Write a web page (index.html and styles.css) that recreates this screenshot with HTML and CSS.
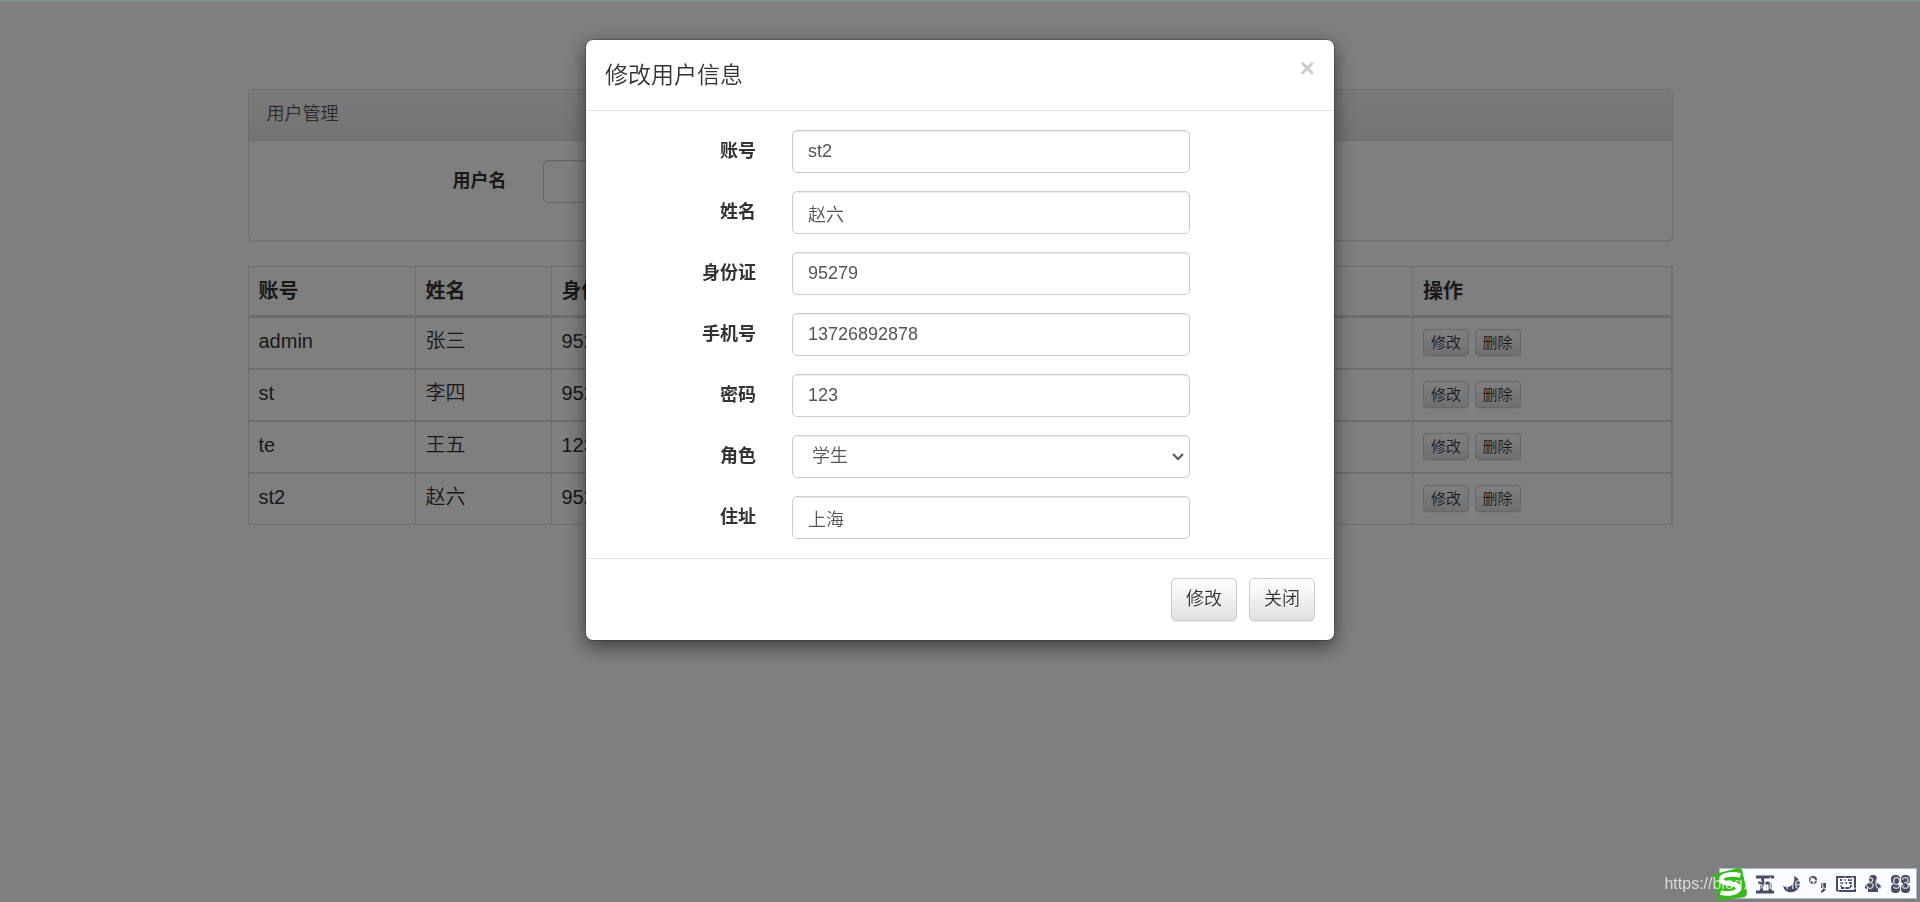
FILE: index.html
```html
<!DOCTYPE html>
<html lang="zh-CN">

<head>
    <meta charset="UTF-8">
    <meta name="viewport" content="width=device-width, initial-scale=1.0">
    <title>用户管理</title>
    <link rel="stylesheet" href="styles.css">
</head>

<body>
    <div class="container">
        <div class="panel">
            <div class="panel-heading">用户管理</div>
            <form class="panel-body">
                <label for="searchName">用户名</label>
                <input type="text" class="form-control" id="searchName">
            </form>
        </div>

        <table class="table">
            <colgroup>
                <col class="col-account">
                <col class="col-name">
                <col class="col-card">
                <col>
                <col>
                <col>
                <col>
                <col class="col-action">
            </colgroup>
            <thead>
                <tr>
                    <th>账号</th>
                    <th>姓名</th>
                    <th>身份证</th>
                    <th>手机号</th>
                    <th>密码</th>
                    <th>角色</th>
                    <th>住址</th>
                    <th>操作</th>
                </tr>
            </thead>
            <tbody>
                <tr>
                    <td>admin</td>
                    <td>张三</td>
                    <td>95277</td>
                    <td></td>
                    <td></td>
                    <td></td>
                    <td></td>
                    <td>
                        <button type="button" class="btn btn-xs">修改</button>
                        <button type="button" class="btn btn-xs">删除</button>
                    </td>
                </tr>
                <tr>
                    <td>st</td>
                    <td>李四</td>
                    <td>95278</td>
                    <td></td>
                    <td></td>
                    <td></td>
                    <td></td>
                    <td>
                        <button type="button" class="btn btn-xs">修改</button>
                        <button type="button" class="btn btn-xs">删除</button>
                    </td>
                </tr>
                <tr>
                    <td>te</td>
                    <td>王五</td>
                    <td>123</td>
                    <td></td>
                    <td></td>
                    <td></td>
                    <td></td>
                    <td>
                        <button type="button" class="btn btn-xs">修改</button>
                        <button type="button" class="btn btn-xs">删除</button>
                    </td>
                </tr>
                <tr>
                    <td>st2</td>
                    <td>赵六</td>
                    <td>95279</td>
                    <td></td>
                    <td>123</td>
                    <td>学生</td>
                    <td>上海</td>
                    <td>
                        <button type="button" class="btn btn-xs">修改</button>
                        <button type="button" class="btn btn-xs">删除</button>
                    </td>
                </tr>
            </tbody>
        </table>
    </div>

    <div class="modal-backdrop">
        <form class="modal" role="dialog" aria-labelledby="modalTitle">
            <div class="modal-header">
                <h4 class="modal-title" id="modalTitle">修改用户信息</h4>
                <button type="button" class="close" aria-label="关闭">×</button>
            </div>
            <div class="modal-body">
                <div class="form-group">
                    <label for="account">账号</label>
                    <input type="text" class="form-control" id="account" value="st2">
                </div>
                <div class="form-group">
                    <label for="name">姓名</label>
                    <input type="text" class="form-control" id="name" value="赵六">
                </div>
                <div class="form-group">
                    <label for="card">身份证</label>
                    <input type="text" class="form-control" id="card" value="95279">
                </div>
                <div class="form-group">
                    <label for="phone">手机号</label>
                    <input type="text" class="form-control" id="phone" value="13726892878">
                </div>
                <div class="form-group">
                    <label for="pwd">密码</label>
                    <input type="text" class="form-control" id="pwd" value="123">
                </div>
                <div class="form-group">
                    <label for="role">角色</label>
                    <select class="form-control" id="role">
                        <option selected>学生</option>
                    </select>
                </div>
                <div class="form-group">
                    <label for="address">住址</label>
                    <input type="text" class="form-control" id="address" value="上海">
                </div>
            </div>
            <div class="modal-footer">
                <button type="button" class="btn">修改</button>
                <button type="button" class="btn">关闭</button>
            </div>
        </form>
    </div>

    <div class="top-line"></div>

    <!-- input method bar -->
    <div class="ime">
        <svg class="ime-logo" viewBox="0 0 36 36">
            <path d="M4 7 L27 1 Q30 0 31 4 L36 27 Q36 31 33 32 L10 35 Q6 36 5 32 L0 11 Q0 8 4 7Z" fill="#35b91b" />
            <path d="M29 9 C18 6 8 9 9 14 C10 19 27 16 27 22 C27 28 15 29 8 27" fill="none" stroke="#fff" stroke-width="5" />
        </svg>
        <svg viewBox="0 0 20 20">
            <path d="M1 3H19M1 18H19M3 9H16M8 3L6 18M15 9V18" />
        </svg>
        <svg viewBox="0 0 20 20">
            <path class="solid" d="M12 2C20 5 20 16 11 18C6 19 2 17 1 12C7 15 14 11 12 2Z" />
        </svg>
        <svg viewBox="0 0 20 20">
            <circle class="thin" cx="4" cy="6" r="3" />
            <path class="solid" d="M12 9H17V14Q16 18 12 19V17Q14 16 14 14H12Z" />
        </svg>
        <svg viewBox="0 0 20 20">
            <path class="thin" d="M1 3H19V17H1Z" />
            <path class="thin" d="M4 6H6M8 6H10M12 6H16M4 9H7M9 9H11M13 9H16M4 12H6M14 12H16M5 14H15" />
        </svg>
        <svg viewBox="0 0 20 20">
            <circle class="solid" cx="10" cy="5" r="4" />
            <path class="solid" d="M7 8H13L17 11Q20 14 16 15L15 14V18H5V14L4 15Q0 14 3 11Z" />
        </svg>
        <svg viewBox="0 0 20 20">
            <rect class="solid" x="1" y="1" width="9" height="9" rx="4" />
            <rect class="solid" x="11" y="1" width="9" height="9" rx="4" />
            <rect class="solid" x="1" y="10" width="9" height="9" rx="4" />
            <rect class="solid" x="11" y="10" width="9" height="9" rx="4" />
        </svg>
    </div>
    <div class="watermark">https://blog.csdn.net/qq_41536193</div>
</body>

</html>
```
FILE: styles.css
```css
* {
    box-sizing: border-box;
}

body {
    margin: 0;
    font-family: "Liberation Sans", "Noto Sans CJK SC", sans-serif;
    font-size: 18px;
    font-weight: 350;
    line-height: 25px;
    color: #333;
    background-color: #fff;
}

.container {
    max-width: 1463px;
    margin: 0 auto;
    padding: 89px 19px 0;
}

label {
    font-weight: bold;
    text-align: right;
}

.panel {
    margin-bottom: 25px;
    border: 1px solid #ddd;
    border-radius: 5px;
    box-shadow: 0 1px 2px rgba(0, 0, 0, 0.05);
}

.panel-heading {
    padding: 12px 18px 13px;
    border-bottom: 1px solid #ddd;
    color: #555;
    background-image: linear-gradient(#f5f5f5, #e8e8e8);
}

.panel-body {
    display: grid;
    grid-template-columns: 239px 400px;
    gap: 36px;
    align-items: center;
    padding: 19px 19px 37px;
}

.form-control {
    width: 100%;
    height: 43px;
    padding: 8px 15px;
    border: 1px solid #ccc;
    border-radius: 5px;
    box-shadow: inset 0 1px 1px rgba(0, 0, 0, 0.075);
    font: inherit;
    color: #555;
    background-color: #fff;
}

select.form-control {
    padding: 8px 19px;
    appearance: none;
    background-image: url("data:image/svg+xml,%3Csvg xmlns='http://www.w3.org/2000/svg' viewBox='0 0 12 8'%3E%3Cpath d='M1 1L6 6L11 1' fill='none' stroke='%23555' stroke-width='2'/%3E%3C/svg%3E");
    background-repeat: no-repeat;
    background-position: right 5px center;
    background-size: 12px 8px;
}

.table {
    width: 100%;
    table-layout: fixed;
    border-collapse: collapse;
    border: 1px solid #ddd;
    border-right-width: 2px;
    font-size: 20px;
    line-height: 29px;
}

.col-account {
    width: 167px;
}

.col-name {
    width: 136px;
}

.col-card {
    width: 12%;
}

.col-action {
    width: 259px;
}

.table th,
.table td {
    height: 52px;
    padding: 10px;
    border: 1px solid #ddd;
    border-bottom-width: 2px;
    text-align: left;
    vertical-align: top;
    white-space: nowrap;
}

.table th {
    height: 50px;
    padding-bottom: 9px;
    border-bottom-width: 3px;
}

.table td {
    padding-top: 9px;
}

.table tr:last-child td {
    border-bottom-width: 1px;
}

.btn {
    padding: 8px 15px;
    border: 1px solid #ccc;
    border-radius: 5px;
    font: inherit;
    color: #333;
    text-shadow: 0 1px 0 #fff;
    background-image: linear-gradient(#fff, #e0e0e0);
    box-shadow: inset 0 1px 0 rgba(255, 255, 255, 0.15), 0 1px 1px rgba(0, 0, 0, 0.075);
    cursor: pointer;
}

.btn-xs {
    padding: 1px 7px;
    border-radius: 4px;
    font-size: 15px;
    line-height: 23px;
}

.modal-backdrop {
    position: fixed;
    inset: 0;
    padding-top: 39px;
    background-color: rgba(0, 0, 0, 0.5);
}

.modal {
    width: 750px;
    max-width: 100%;
    margin: 0 auto;
    border: 1px solid rgba(0, 0, 0, 0.2);
    border-radius: 8px;
    background-color: #fff;
    background-clip: padding-box;
    box-shadow: 0 6px 19px rgba(0, 0, 0, 0.5);
}

.modal-header {
    display: flex;
    justify-content: space-between;
    align-items: flex-start;
    padding: 16px 19px;
    border-bottom: 1px solid #e5e5e5;
}

.modal-title {
    margin: 0;
    font-size: 23px;
    font-weight: 350;
    line-height: 38px;
}

.close {
    padding: 0;
    border: none;
    font-family: "Liberation Sans", sans-serif;
    font-size: 26px;
    font-weight: bold;
    line-height: 25px;
    color: #000;
    opacity: 0.2;
    background: none;
    cursor: pointer;
}

.modal-body {
    display: grid;
    gap: 18px;
    padding: 19px;
}

.form-group {
    display: grid;
    grid-template-columns: 151px 398px;
    gap: 36px;
    align-items: center;
}

.modal-footer {
    display: flex;
    justify-content: flex-end;
    gap: 12px;
    padding: 19px;
    border-top: 1px solid #e5e5e5;
}

.modal-footer .btn {
    padding: 8px 14px;
}

.top-line {
    position: fixed;
    inset: 0 0 auto;
    height: 1px;
    background-color: #74979e;
}

.ime {
    position: fixed;
    right: 3px;
    bottom: 3px;
    display: flex;
    align-items: center;
    gap: 7px;
    height: 31px;
    padding-right: 6px;
    border: 1px solid #a9bccb;
    background-color: #fafcff;
}

.ime svg {
    width: 20px;
    height: 20px;
    fill: none;
    stroke: #454c66;
    stroke-width: 3;
}

.ime .ime-logo {
    width: 36px;
    height: 34px;
    margin-left: -8px;
    stroke: none;
}

.ime .solid {
    fill: #454c66;
    stroke: none;
}

.ime .thin {
    stroke-width: 2;
}

.watermark {
    position: fixed;
    right: 10px;
    bottom: 6px;
    font-size: 16px;
    color: rgba(255, 255, 255, 0.7);
}
```
